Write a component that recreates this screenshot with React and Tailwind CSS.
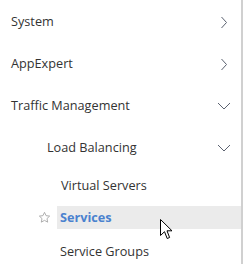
import React from "react";

function ChevronRight() {
  return (
    <svg width="8" height="13" viewBox="0 0 8 13" className="text-[#5b6270]">
      <path d="M1.5 1 L6.5 6.5 L1.5 12" fill="none" stroke="currentColor" strokeWidth="1" />
    </svg>
  );
}

function ChevronDown() {
  return (
    <svg width="14" height="8" viewBox="0 0 14 8" className="text-[#5b6270]">
      <path d="M1 1 L7 7 L13 1" fill="none" stroke="currentColor" strokeWidth="1" />
    </svg>
  );
}

function Star() {
  return (
    <svg width="13" height="13" viewBox="0 0 24 24" className="text-[#a3a3a3]">
      <path
        d="M12 2.5 L14.9 8.6 L21.5 9.4 L16.6 14 L17.9 20.6 L12 17.3 L6.1 20.6 L7.4 14 L2.5 9.4 L9.1 8.6 Z"
        fill="none"
        stroke="currentColor"
        strokeWidth="1.6"
        strokeLinejoin="round"
      />
    </svg>
  );
}

function Cursor() {
  return (
    <svg width="13" height="21" viewBox="0 0 13 21" className="absolute left-[160px] top-[219px]">
      <path
        d="M0.5 0.5 L0.5 16.5 L4.5 12.7 L7.2 19.5 L9.6 18.5 L7 11.8 L12 11.8 Z"
        fill="#fff"
        stroke="#000"
        strokeWidth="1"
        strokeLinejoin="miter"
      />
    </svg>
  );
}

function TopItem({ label, open }) {
  return (
    <div className="flex h-[42px] items-center justify-between pl-[11px] pr-[9px]">
      <span>{label}</span>
      <span className="flex w-[16px] justify-center">{open ? <ChevronDown /> : <ChevronRight />}</span>
    </div>
  );
}

export default function App() {
  return (
    <div
      className="relative h-[264px] w-[245px] bg-white text-[12.7px] text-[#333333]"
      style={{ fontFamily: '"Open Sans", sans-serif' }}
    >
      <div className="h-full w-[243px] border-r-2 border-[#d0d0d0] pt-px">
        <TopItem label="System" />
        <TopItem label="AppExpert" />
        <TopItem label="Traffic Management" open />
        <div className="flex h-[42px] items-center justify-between pl-[47px] pr-[9px]">
          <span>Load Balancing</span>
          <span className="flex w-[16px] justify-center"><ChevronDown /></span>
        </div>
        <div className="flex h-[34px] items-center pl-[61px]">Virtual Servers</div>
        <div className="mt-[3px] flex h-[23px] items-center">
          <span className="flex w-[57px] justify-end pr-[6px]"><Star /></span>
          <span className="flex h-full flex-1 items-center bg-[#ebebeb] pl-[3px] font-bold text-[#4a82cf]">
            Services
          </span>
        </div>
        <div className="mt-[6px] flex h-[33px] items-center pl-[60px]">Service Groups</div>
      </div>
      <Cursor />
    </div>
  );
}
